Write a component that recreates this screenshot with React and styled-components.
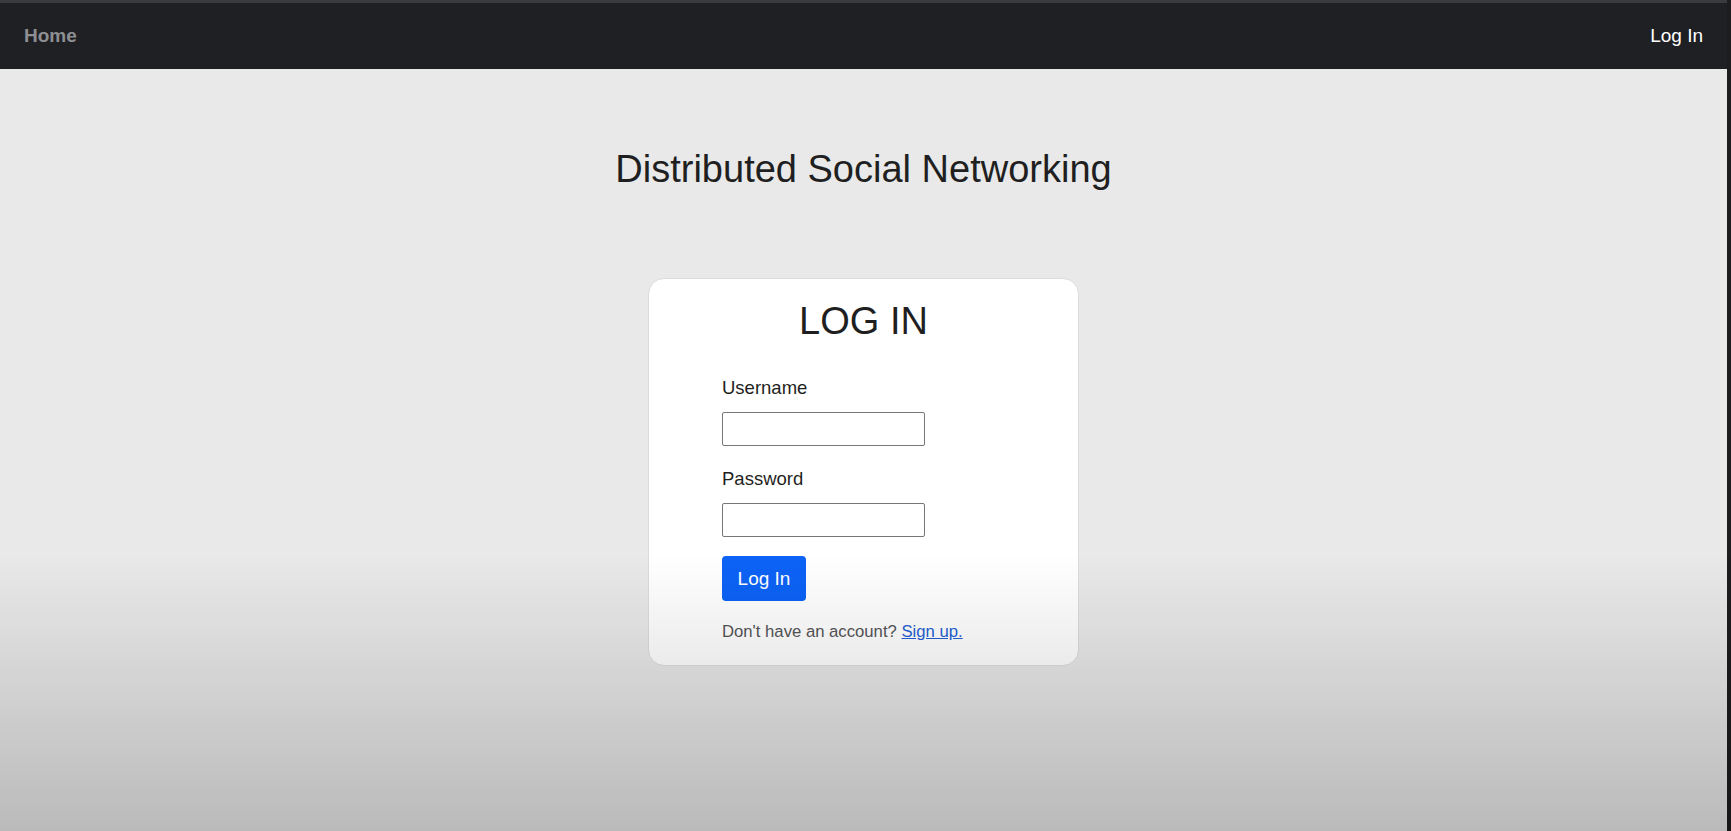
import styled, { createGlobalStyle } from 'styled-components';

const GlobalStyle = createGlobalStyle`
    html, body {
        margin: 0;
        padding: 0;
        height: 100%;
    }
    body {
        background: #e9e9e9;
        font-family: "Liberation Sans", Arial, sans-serif;
        color: #212529;
        overflow: hidden;
    }
`;

const Frame = styled.div`
    min-height: 100vh;
    border-right: 4px solid #1d1d1f;
    box-sizing: border-box;
    display: flex;
    flex-direction: column;
`;

const Navbar = styled.nav`
    height: 66px;
    border-top: 3px solid #3b3b3e;
    background: #1f2024;
    display: flex;
    align-items: center;
    justify-content: space-between;
    padding: 0 24px;

    a {
        text-decoration: none;
        font-size: 19px;
    }
`;

const Brand = styled.a`
    color: #8e8f92;
    font-weight: bold;
`;

const NavLink = styled.a`
    color: #ffffff;
`;

const Main = styled.main`
    display: flex;
    flex-direction: column;
    align-items: center;
`;

const Title = styled.h1`
    margin: 78px 0 0;
    font-size: 38px;
    font-weight: normal;
    line-height: 1.2;
    color: #1f1f21;
`;

const Card = styled.div`
    margin-top: 85px;
    width: 431px;
    box-sizing: border-box;
    background: #ffffff;
    border: 1px solid #dcdcdc;
    border-radius: 16px;
    padding: 20px 0 21px 73px;

    h2 {
        margin: 0 0 30px -73px;
        text-align: center;
        font-size: 38px;
        font-weight: normal;
        line-height: 1.2;
        color: #1f1f21;
    }
`;

const Field = styled.div`
    display: flex;
    flex-direction: column;
    align-items: flex-start;
    margin-bottom: 19px;
`;

const Label = styled.label`
    font-size: 18.5px;
    line-height: 27px;
    margin-bottom: 11px;
    color: #1f1f21;
`;

const Input = styled.input`
    width: 203px;
    height: 34px;
    box-sizing: border-box;
    border: 1px solid #777777;
    border-radius: 2px;
    background: #ffffff;
    padding: 0 6px;
    font-size: 16px;
`;

const Button = styled.button`
    width: 84px;
    height: 45px;
    border: none;
    border-radius: 4px;
    background: #0d63f6;
    color: #ffffff;
    font-family: inherit;
    font-size: 19px;
    cursor: pointer;
`;

const Footer = styled.p`
    margin: 19px 0 0;
    font-size: 16.7px;
    line-height: 24px;
    color: #555558;

    a {
        color: #1f5fd4;
        text-decoration: underline;
    }
`;

const Shade = styled.div`
    position: fixed;
    left: 0;
    right: 0;
    top: 555px;
    bottom: 0;
    pointer-events: none;
    background: linear-gradient(to bottom, rgba(0, 0, 0, 0), rgba(0, 0, 0, 0.2));
`;

const App = () => {
    return (
        <>
            <GlobalStyle />
            <Frame>
                <Navbar>
                    <Brand href="#">Home</Brand>
                    <NavLink href="#">Log In</NavLink>
                </Navbar>
                <Main>
                    <Title>Distributed Social Networking</Title>
                    <Card>
                        <h2>LOG IN</h2>
                        <form onSubmit={(e) => e.preventDefault()}>
                            <Field>
                                <Label htmlFor="username">Username</Label>
                                <Input id="username" type="text" />
                            </Field>
                            <Field>
                                <Label htmlFor="password">Password</Label>
                                <Input id="password" type="password" />
                            </Field>
                            <Button type="submit">Log In</Button>
                            <Footer>
                                Don't have an account? <a href="#">Sign up.</a>
                            </Footer>
                        </form>
                    </Card>
                </Main>
            </Frame>
            <Shade />
        </>
    );
}

export default App;
